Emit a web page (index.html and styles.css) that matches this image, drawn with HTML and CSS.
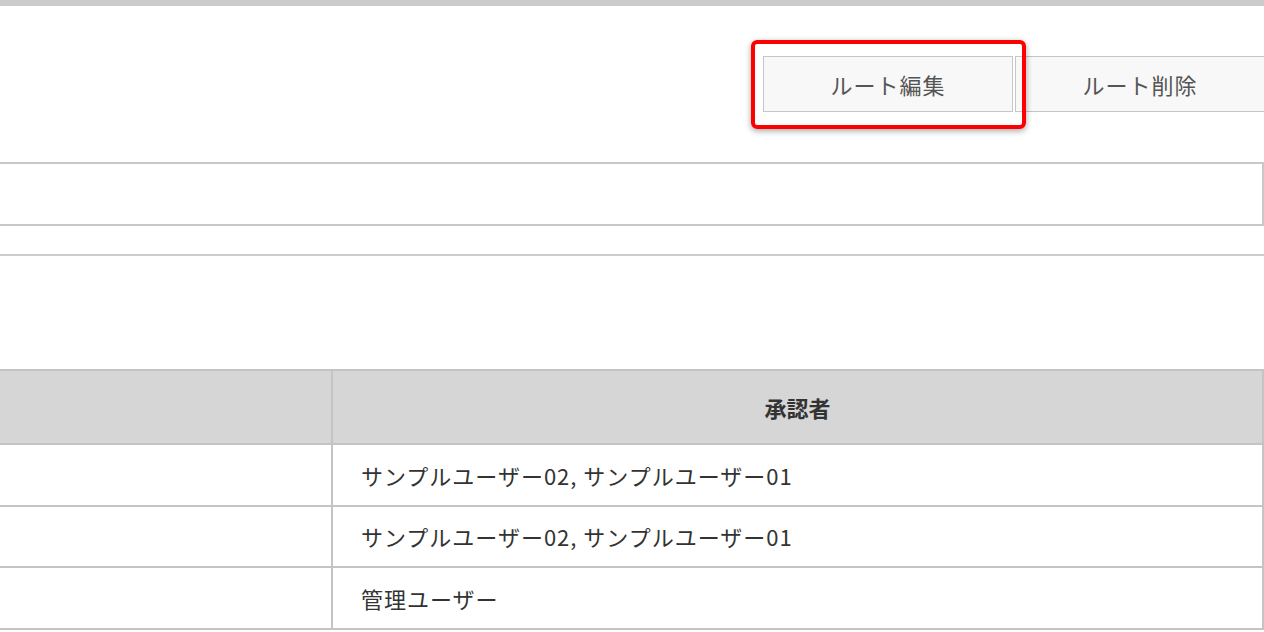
FILE: index.html
```html
<!DOCTYPE html>
<html lang="ja">
<head>
    <meta charset="UTF-8">
    <title>承認ルート</title>
    <link rel="stylesheet" href="styles.css">
</head>
<body>
    <div class="topbar"></div>

    <div class="page">
        <!-- ルート操作ボタン -->
        <div class="actions">
            <div class="edit-wrap">
                <button type="button" class="btn">ルート編集</button>
                <span class="highlight"></span>
            </div>
            <button type="button" class="btn">ルート削除</button>
        </div>

        <div class="route-box"></div>
        <div class="divider"></div>

        <!-- 承認者一覧 -->
        <table class="route-table">
            <thead>
                <tr>
                    <th class="col-step"></th>
                    <th>承認者</th>
                </tr>
            </thead>
            <tbody>
                <tr>
                    <td></td>
                    <td>サンプルユーザー02, サンプルユーザー01</td>
                </tr>
                <tr>
                    <td></td>
                    <td>サンプルユーザー02, サンプルユーザー01</td>
                </tr>
                <tr>
                    <td></td>
                    <td>管理ユーザー</td>
                </tr>
            </tbody>
        </table>
    </div>
</body>
</html>
```

FILE: styles.css
```css
body {
    font-family: "Noto Sans CJK JP", "Noto Sans", sans-serif;
    background-color: #ffffff;
    color: #333333;
    margin: 0;
    padding: 0;
    overflow: hidden;
}

.topbar {
    height: 6px;
    background-color: #cbcbcb;
}

.page {
    margin-left: -40px;
}

.actions {
    display: flex;
    justify-content: flex-end;
    gap: 2px;
    padding-top: 50px;
    margin-right: -1px;
}

.edit-wrap {
    position: relative;
}

.btn {
    width: 250px;
    height: 56px;
    background-color: #f8f8f8;
    border: 1px solid #c6c6c6;
    color: #555555;
    font-family: inherit;
    font-size: 22px;
    letter-spacing: 1px;
    padding: 0;
}

/* 注目用の赤枠 */
.highlight {
    position: absolute;
    left: -12px;
    top: -16px;
    right: -13px;
    bottom: -17px;
    border: 4px solid #ff0000;
    border-radius: 6px;
    box-shadow: 0 2px 6px rgba(0, 0, 0, 0.35);
}

.route-box {
    margin-top: 50px;
    height: 64px;
    border: 2px solid #c8c8c8;
    box-sizing: border-box;
}

.divider {
    margin-top: 28px;
    height: 2px;
    background-color: #cccccc;
}

.route-table {
    margin-top: 113px;
    width: 100%;
    border-collapse: collapse;
}

.route-table th,
.route-table td {
    border: 2px solid #c4c4c4;
    font-size: 22px;
    text-align: left;
    padding: 0 28px;
}

.route-table th {
    background-color: #d6d6d6;
    text-align: center;
    font-weight: bold;
    height: 72px;
}

.route-table td {
    height: 59.5px;
    letter-spacing: 1px;
}

.route-table .col-step {
    width: 313px;
}
```
